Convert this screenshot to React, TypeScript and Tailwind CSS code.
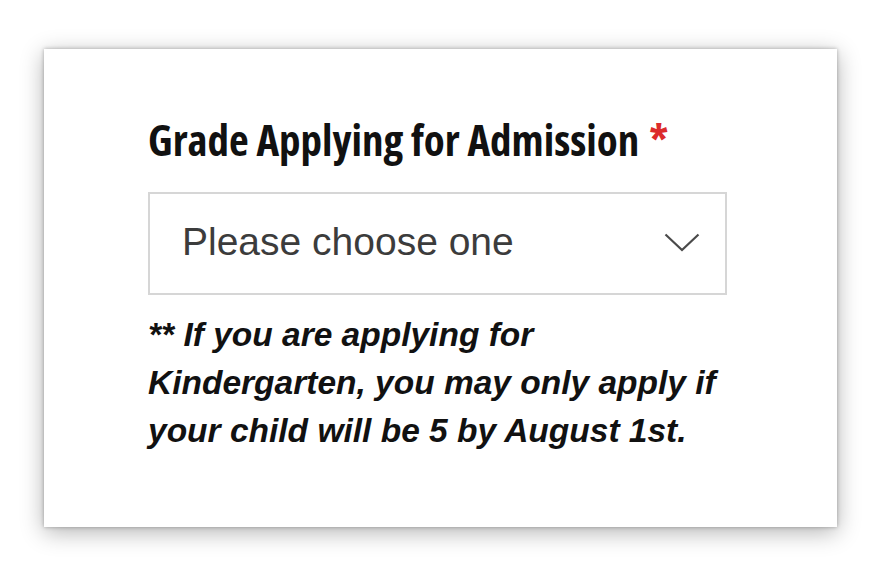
export default function App() {
  return (
    <main className="min-h-[576px] w-[880px] bg-white pl-[44px] pt-[49px]">
      {/* card */}
      <div className="h-[478px] w-[793px] bg-white pl-[104px] pt-[65px] shadow-[0_0_4px_rgba(0,0,0,0.3),0_5px_22px_rgba(0,0,0,0.3)]">
        <label
          className="block text-[43px] font-bold leading-[52px] text-[#111]"
          style={{ fontFamily: '"Open Sans", sans-serif', fontStretch: "75%" }}
        >
          Grade Applying for Admission
          <span className="ml-[10px] text-[#dc2b2b]">*</span>
        </label>

        <div className="mt-[26px] flex h-[103px] w-[579px] items-center justify-between border-2 border-[#d6d6d6] pl-[32px] pr-[25px] pb-[3px]">
          <span className="font-['Liberation_Sans',Arial,sans-serif] text-[39px] text-[#3c3c3c]">
            Please choose one
          </span>
          <svg width="36" height="19" viewBox="0 0 36 19" fill="none">
            <path d="M1.5 1.5 L18 17 L34.5 1.5" stroke="#4a4a4a" strokeWidth="2.2" />
          </svg>
        </div>

        <p className="mt-[16px] w-[620px] font-['Liberation_Sans',Arial,sans-serif] text-[33.5px] font-bold italic leading-[48px] text-[#111]">
          ** If you are applying for
          <br />
          Kindergarten, you may only apply if
          <br />
          your child will be 5 by August 1st.
        </p>
      </div>
    </main>
  );
}
